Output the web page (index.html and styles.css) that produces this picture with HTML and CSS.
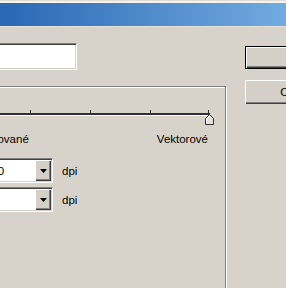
FILE: index.html
```html
<!DOCTYPE html>
<html>
	<head>
		<meta charset="UTF-8">
		<title>Sloučení průhlednosti</title>
		<link rel="stylesheet" href="styles.css">
	</head>
	<body>
		<!--okraj a titulek okna-->
		<div class="frame-top"></div>
		<div class="titlebar"></div>
		<div class="title-edge"></div>
		<div class="client">
			<div class="main">
				<!--název-->
				<div class="name-field"></div>
				<!--skupina nastavení-->
				<div class="group">
					<div class="slider">
						<div class="track"></div>
						<span class="tick t1"></span>
						<span class="tick t2"></span>
						<span class="tick t3"></span>
						<span class="tick t4"></span>
						<svg class="thumb" width="9" height="11" viewBox="0 0 9 11">
							<polygon points="0.5,10.5 0.5,4.5 4.5,0.5 8.5,4.5 8.5,10.5" fill="#e4e1da" stroke="#303030"/>
							<polyline points="1.5,9.5 1.5,5 4.5,2" fill="none" stroke="#fff"/>
						</svg>
					</div>
					<div class="labels">
						<span>Rastrované</span>
						<span>Vektorové</span>
					</div>
					<div class="res-row first">
						<div class="combo">
							<span class="value">300</span>
							<span class="drop"><svg width="7" height="4" viewBox="0 0 7 4"><polygon points="0,0 7,0 3.5,4" fill="#000"/></svg></span>
						</div>
						<span>dpi</span>
					</div>
					<div class="res-row">
						<div class="combo">
							<span class="value">72</span>
							<span class="drop"><svg width="7" height="4" viewBox="0 0 7 4"><polygon points="0,0 7,0 3.5,4" fill="#000"/></svg></span>
						</div>
						<span>dpi</span>
					</div>
				</div>
			</div>
			<!--tlačítka-->
			<div class="buttons">
				<button class="default">OK</button>
				<button class="second">Obnovit</button>
			</div>
		</div>
	</body>
</html>
```

FILE: styles.css
```css
* {
	margin: 0;
	padding: 0;
	box-sizing: border-box;
}
body {
	width: 286px;
	height: 288px;
	overflow: hidden;
	background: #d7d3cb;
	font: 11.5px "Liberation Sans", Arial, sans-serif;
	color: #000;
}
.frame-top {
	height: 3px;
	border-top: 1px solid #e0dcd4;
	background: #f5f3ef;
}
.titlebar {
	height: 23px;
	background: linear-gradient(to right, #2a67b4, #72abe0);
}
.title-edge {
	height: 1px;
	background: #e8e2da;
}
.client {
	display: flex;
	padding-top: 16px;
}
.main {
	width: 226px;
	flex: none;
}
.name-field {
	margin-left: -50px;
	width: 127px;
	height: 27px;
	background: #fff;
	border: 1px solid;
	border-color: #808080 #fff #fff #808080;
	box-shadow: inset 1px 1px #404040, inset -1px -1px #d4d0c8;
}
.group {
	margin-top: 16px;
	margin-left: -40px;
	width: 266px;
	height: 240px;
	border: 1px solid #808080;
	box-shadow: inset 1px 1px #fff, 1px 1px #fff;
}
.slider {
	position: relative;
	margin-top: 23px;
	width: 249px;
	height: 16px;
	padding-top: 3px;
}
.track {
	height: 3px;
	border-top: 2px solid #303030;
	border-bottom: 1px solid #fff;
}
.tick {
	position: absolute;
	top: 0;
	width: 1px;
	height: 3px;
	background: #303030;
}
.t1 { left: 69px; }
.t2 { left: 129px; }
.t3 { left: 189px; }
.t4 { left: 247px; }
.thumb {
	position: absolute;
	top: 4px;
	left: 244px;
}
.labels {
	display: flex;
	justify-content: space-between;
	width: 249px;
	padding: 0 2px 0 9px;
	margin-top: 6px;
	line-height: 14px;
}
.res-row {
	display: flex;
	align-items: center;
	gap: 9px;
	margin-left: 19px;
	margin-top: 4px;
}
.res-row.first {
	margin-top: 12px;
}
.combo {
	width: 73px;
	height: 25px;
	display: flex;
	padding: 1px;
	background: #fff;
	border: 1px solid;
	border-color: #808080 #fff #fff #808080;
	box-shadow: inset 1px 1px #404040, inset -1px -1px #d4d0c8;
}
.value {
	flex: 1;
	padding-left: 3px;
	display: flex;
	align-items: center;
}
.drop {
	width: 16px;
	display: flex;
	align-items: center;
	justify-content: center;
	background: #d4d0c8;
	box-shadow: inset 1px 1px #fff, inset -1px -1px #404040, inset -2px -2px #808080;
}
.buttons {
	margin-left: 19px;
	padding-top: 3px;
	display: flex;
	flex-direction: column;
	gap: 11px;
}
button {
	width: 110px;
	height: 23px;
	font: inherit;
	color: #000;
	background: #d4d0c8;
	border: none;
	box-shadow: inset 1px 1px #fff, inset -1px -1px #404040, inset -2px -2px #808080;
}
button.default {
	border: 1px solid #000;
}
button.second {
	height: 24px;
}
```
